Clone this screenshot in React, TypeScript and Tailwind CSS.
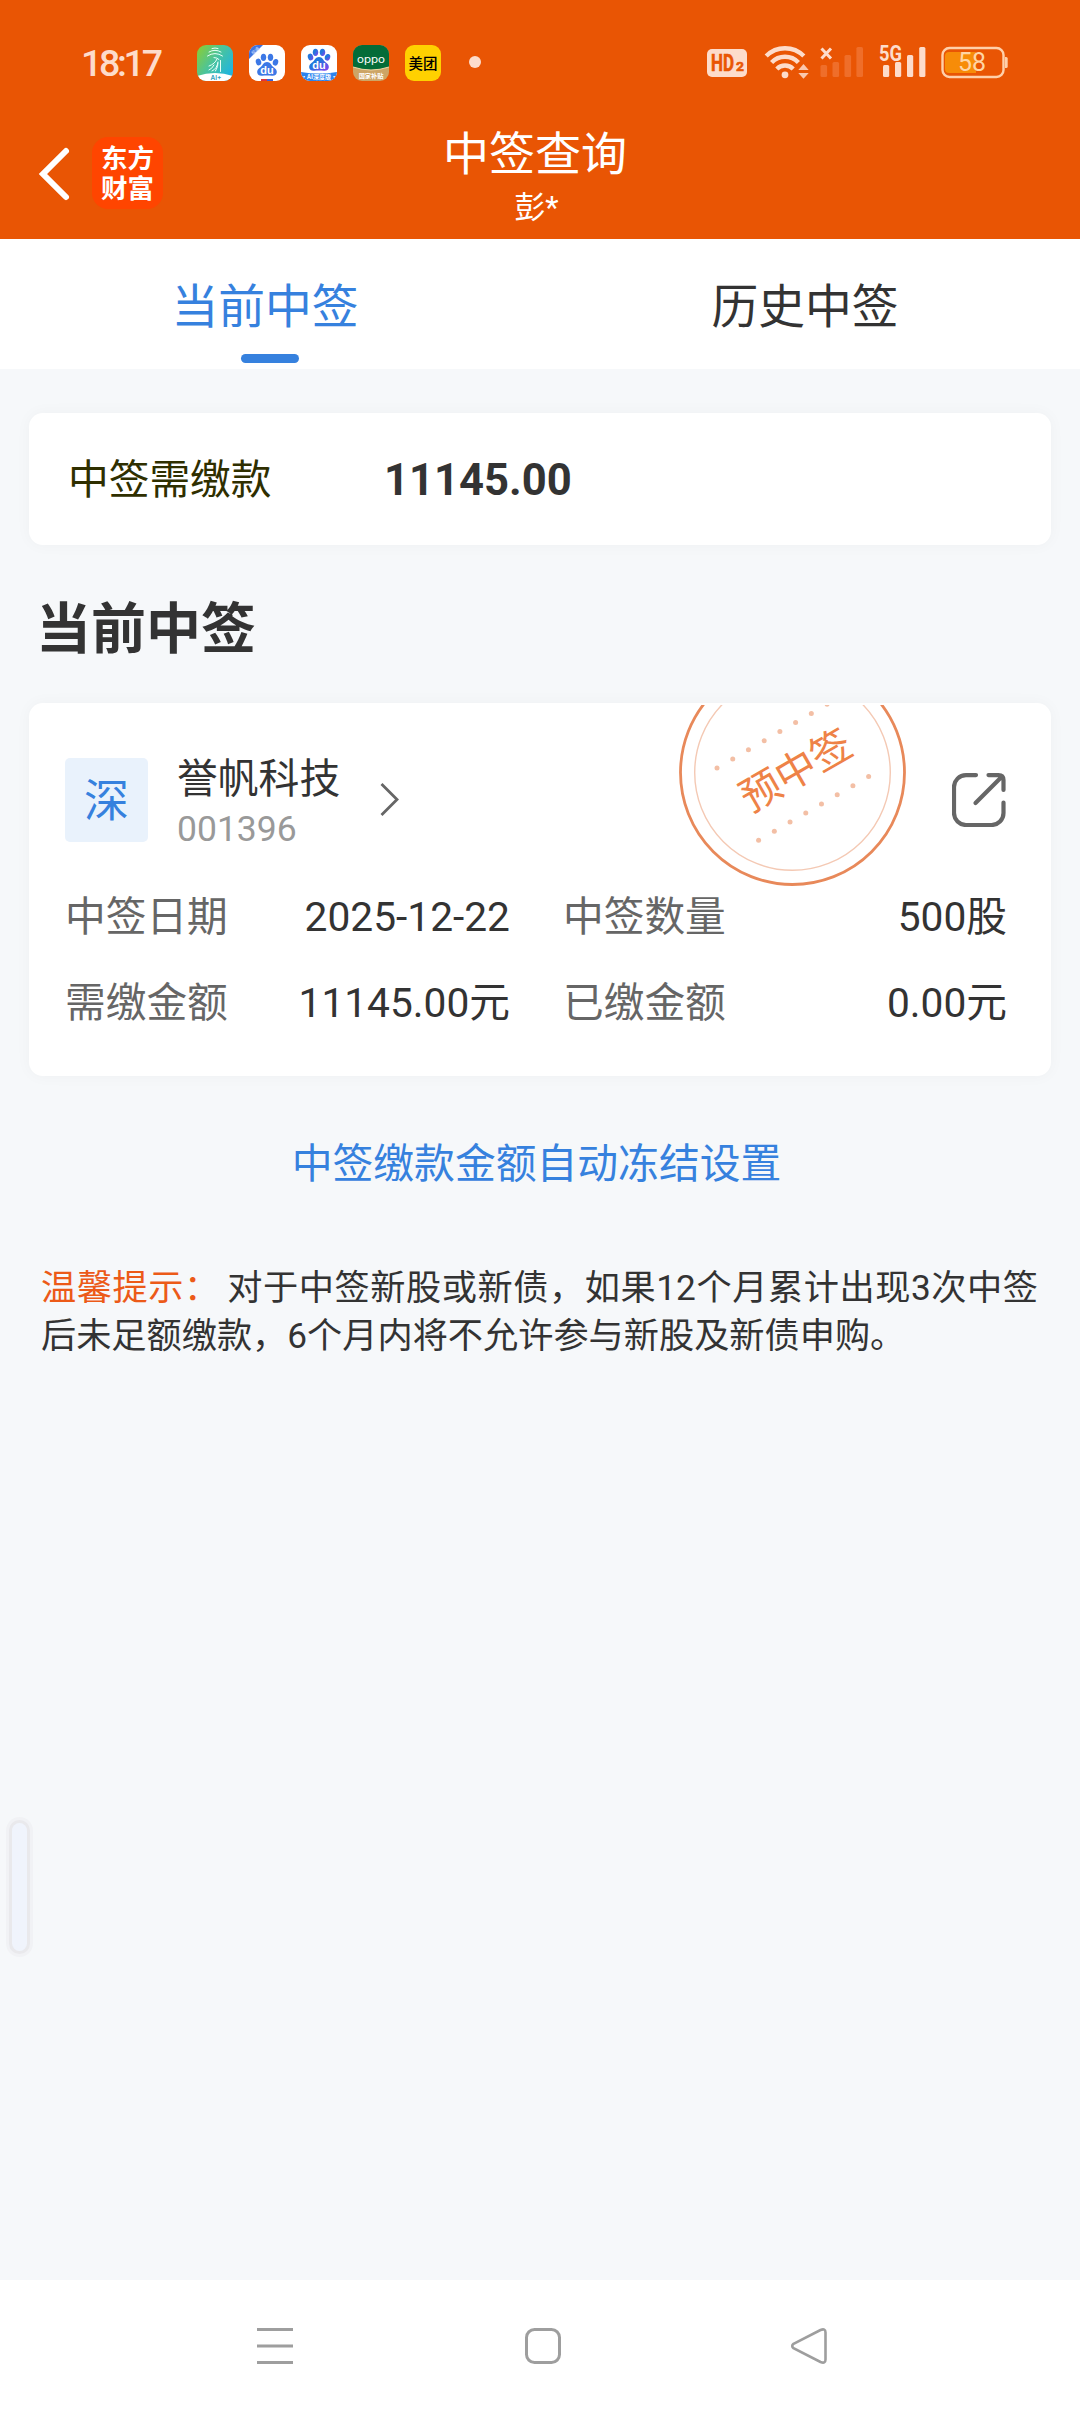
import { ReactNode } from 'react';

interface FieldProps {
  label: string;
  value: string;
}

const FIELDS: FieldProps[] = [
  { label: '中签日期', value: '2025-12-22' },
  { label: '中签数量', value: '500股' },
  { label: '需缴金额', value: '11145.00元' },
  { label: '已缴金额', value: '0.00元' },
];

const STAMP_DOTS = [0, 1, 2, 3, 4, 5, 6, 7];

function AppIcon({ children, id }: { children: ReactNode; id: string }) {
  return (
    <svg className="h-9 w-9" viewBox="0 0 36 36">
      <defs>
        <clipPath id={id}>
          <rect width="36" height="36" rx="9" />
        </clipPath>
      </defs>
      <g clipPath={`url(#${id})`}>{children}</g>
    </svg>
  );
}

function Paw({ fill, y = 0 }: { fill: string; y?: number }) {
  return (
    <g transform={`translate(0 ${y})`}>
      <g fill={fill}>
        <ellipse cx="9.5" cy="14" rx="2.7" ry="3.4" transform="rotate(-15 9.5 14)" />
        <ellipse cx="14.5" cy="9.3" rx="2.7" ry="3.6" />
        <ellipse cx="21.5" cy="9.3" rx="2.7" ry="3.6" />
        <ellipse cx="26.5" cy="14.3" rx="2.7" ry="3.4" transform="rotate(15 26.5 14.3)" />
        <path d="M18 14c-3.500 0-4 3-6.300 5s-3.900 3-3.500 5.600c.4 2.600 2.500 3.500 5 3.200 3-.4 6.600-.4 9.600 0 2.500.3 4.600-.6 5-3.200.4-2.600-1.200-3.600-3.500-5.600s-2.800-5-6.300-5z" />
      </g>
      <text x="18" y="25.500" textAnchor="middle" fill="#fff" className="font-['Liberation_Sans'] text-[11px] font-bold">
        du
      </text>
    </g>
  );
}

function StatusBar() {
  return (
    <div className="flex h-[124px] items-start pt-[44px] pl-[81px] text-[#fddccb]">
      <span className="w-[116px] font-[Roboto] text-[37.500px] leading-[38px] font-medium tracking-[-3.300px]">
        18:17
      </span>
      <div className="flex gap-4 pt-px">
        <AppIcon id="clip-health">
          <linearGradient id="health" x1="0" y1="0" x2="1" y2="0.7">
            <stop offset="0" stopColor="#8fce2c" />
            <stop offset="0.5" stopColor="#4cc49a" />
            <stop offset="1" stopColor="#1fb5e0" />
          </linearGradient>
          <rect width="36" height="36" fill="url(#health)" />
          <g fill="none" stroke="#e8fff8" strokeWidth="1" strokeLinecap="round">
            <path d="M15 3.500q3-1 6 0M12 7q6-3.500 12 0M10.500 11q7.500-5 15 0M17 12.500q3 0 5 2M20 14q-2 5-8 7M21 17q-1 7-6 9M17 20q-2 4-5 5M18.500 26q3-5 2.500-8M23.500 15.500v11" />
          </g>
          <path d="M0 31q18-6 36 0v5H0z" fill="#fff" />
          <text x="19" y="35" textAnchor="middle" fill="#2b9dbb" className="font-[Inter] text-[6.500px] font-semibold">
            AI+
          </text>
        </AppIcon>
        <AppIcon id="clip-lite">
          <rect width="36" height="36" fill="#fff" />
          <path d="M0 0h14L0 14z" fill="#3f73e0" />
          <text
            x="6"
            y="7.500"
            textAnchor="middle"
            transform="rotate(-45 6 5.500)"
            fill="#cfe0ff"
            className="font-['Noto_Sans_CJK_SC'] text-[4.500px]"
          >
            极速
          </text>
          <Paw fill="#3c78e6" y={3} />
          <path d="M12 34h6v2h-6z" fill="#e0343c" />
          <path d="M18 34h6v2h-6z" fill="#3b62d8" />
        </AppIcon>
        <AppIcon id="clip-baidu">
          <rect width="36" height="36" fill="#fff" />
          <linearGradient id="paw" x1="0" y1="0" x2="1" y2="1">
            <stop offset="0.4" stopColor="#2277dc" />
            <stop offset="1" stopColor="#8b3df0" />
          </linearGradient>
          <Paw fill="url(#paw)" y={-2} />
          <path d="M0 27q18 3 36 0v9H0z" fill="#2b83ee" />
          <text x="18" y="34.300" textAnchor="middle" fill="#fff" className="font-['Noto_Sans_CJK_SC'] text-[6px] font-bold">
            ·AI深度版·
          </text>
        </AppIcon>
        <AppIcon id="clip-oppo">
          <rect width="36" height="36" fill="#cda566" />
          <path d="M0 0h36v22q-18 6-36 0z" fill="#046c38" />
          <path d="M0 22q18 6 36 0" fill="none" stroke="#efd9a8" />
          <text x="18" y="18" textAnchor="middle" textLength="28" lengthAdjust="spacingAndGlyphs" fill="#fff" className="font-[Inter] text-[10px]">
            oppo
          </text>
          <text x="18" y="33" textAnchor="middle" fill="#fff" className="font-['Noto_Sans_CJK_SC'] text-[6.200px] font-bold">
            国家补贴
          </text>
        </AppIcon>
        <AppIcon id="clip-meituan">
          <rect width="36" height="36" fill="#ffd100" />
          <text x="18" y="23.500" textAnchor="middle" className="font-['Noto_Sans_CJK_SC'] text-[14.500px] font-medium">
            美团
          </text>
        </AppIcon>
      </div>
      <span className="mt-3 ml-7 h-3 w-3 rounded-full bg-[#fddccb]" />

      <svg className="mt-[5px] ml-[226px] h-7 w-10" viewBox="0 0 40 28" fill="#e95504" stroke="#e95504" strokeWidth="0.6">
        <rect width="40" height="28" rx="5" fill="#fddccb" stroke="none" />
        <text x="4" y="22" textLength="23" lengthAdjust="spacingAndGlyphs" className="font-[Roboto] text-[23px] font-bold">
          HD
        </text>
        <text x="29" y="22" textLength="8" lengthAdjust="spacingAndGlyphs" className="font-[Roboto] text-[13.500px] font-bold">
          2
        </text>
      </svg>
      <svg className="ml-[17px] h-9 w-[46px]" viewBox="0 0 46 36" fill="none" stroke="currentColor" strokeWidth="4.400">
        <path d="M2.200 12a26.500 26.500 0 0 1 37.600 0M7.600 18.500a18.500 18.500 0 0 1 26.800 0M12.800 25a11.500 11.500 0 0 1 16.400 0" />
        <circle cx="21" cy="30.800" r="3.400" fill="currentColor" stroke="none" />
        <path d="M34.300 26l5.200-6 5.200 6zM34.300 29h10.400l-5.200 5.800z" fill="currentColor" stroke="none" opacity="0.85" />
      </svg>
      <svg className="ml-[10px] h-9 w-[44px]" viewBox="0 0 44 36" fill="#ef6e2a">
        <path d="M1.500 4.500l9.500 10M11 4.500l-9.500 10" stroke="#fddccb" strokeWidth="3" />
        <rect x="0.500" y="21" width="6.600" height="12" rx="1.500" />
        <rect x="12.500" y="18" width="6.600" height="15" rx="1.500" />
        <rect x="24.500" y="11" width="6.600" height="22" rx="1.500" />
        <rect x="36.400" y="3" width="6.600" height="30" rx="1.500" />
      </svg>
      <svg className="ml-[15px] h-9 w-[48px] overflow-visible" viewBox="0 0 48 36" fill="currentColor">
        <text x="0" y="17" textLength="23" lengthAdjust="spacingAndGlyphs" className="font-[Roboto] text-[22px] font-bold">
          5G
        </text>
        <rect x="4" y="21" width="6.200" height="12" rx="1.500" />
        <rect x="16" y="18" width="6.200" height="15" rx="1.500" />
        <rect x="28" y="11" width="6.200" height="22" rx="1.500" />
        <rect x="40.200" y="3" width="6.200" height="30" rx="1.500" />
      </svg>
      <svg className="ml-[13px] h-9 w-[68px]" viewBox="0 0 68 36">
        <rect x="2.500" y="4" width="61" height="29" rx="7" fill="none" stroke="#ffd0aa" strokeWidth="2.400" />
        <path d="M9 8h27v21H9a4 4 0 0 1-4-4V12a4 4 0 0 1 4-4z" fill="#f78c08" />
        <path d="M65 13h1.200q1.500 0 1.500 1.500v8q0 1.500-1.500 1.500H65z" fill="#ffd0aa" />
        <text x="18" y="27" textLength="28" lengthAdjust="spacingAndGlyphs" fill="#ffd5a5" className="font-[Roboto] text-[25px]">
          58
        </text>
      </svg>
    </div>
  );
}

function TitleBar() {
  return (
    <div className="grid h-[115px] grid-cols-[442px_186px_1fr]">
      <div className="flex items-start pl-[38px]">
        <svg className="mt-[21px] h-[58px] w-[34px]" viewBox="0 0 34 58" fill="none" stroke="#fff" strokeWidth="6" strokeLinecap="round">
          <path d="M28 6L5 29l23 23" strokeLinejoin="miter" />
        </svg>
        <div className="mt-[13px] ml-[20px] h-[72px] w-[71px] rounded-2xl bg-[#ff4500] pt-[7px] text-center text-[26.500px] leading-[30px] font-bold text-white">
          <div>东方</div>
          <div>财富</div>
        </div>
      </div>
      <div className="flex flex-col items-center pt-[2px] text-white">
        <h1 className="text-[46px] leading-[56px] whitespace-nowrap">中签查询</h1>
        <p className="mt-[6px] ml-[3px] text-[31px] leading-[40px]">彭*</p>
      </div>
    </div>
  );
}

function Tabs() {
  return (
    <div className="grid h-[130px] grid-cols-2 bg-white text-[46.800px] leading-[56px]">
      <div className="flex flex-col items-center pt-[40px] text-[#3681de]">
        <span className="mr-[10px]">当前中签</span>
        <span className="mt-[19px] h-[9px] w-[58px] rounded-full bg-[#3681de]" />
      </div>
      <div className="flex flex-col items-center pt-[40px]">
        <span className="mr-[10px]">历史中签</span>
      </div>
    </div>
  );
}

function Card({ className = '', children }: { className?: string; children: ReactNode }) {
  return (
    <section className={`mx-[29px] rounded-[14px] bg-white shadow-[0_0_16px_rgba(0,0,0,0.035)] ${className}`}>
      {children}
    </section>
  );
}

function Stamp() {
  return (
    <svg className="absolute top-[2px] left-[648px] h-[183px] w-[232px]" viewBox="0 0 232 183">
      <circle cx="115.500" cy="67.500" r="112" fill="none" stroke="#e8895a" strokeWidth="2.800" />
      <circle cx="115.500" cy="67.500" r="97.800" fill="none" stroke="#f4c9b4" strokeWidth="1.400" />
      <g fill="#f3bfa5">
        {STAMP_DOTS.map((i) => (
          <g key={i}>
            <circle cx={40 + i * 15.72} cy={63 - i * 9.1} r="2.500" />
            <circle cx={81.600 + i * 15.72} cy={135.300 - i * 9.1} r="2.500" />
          </g>
        ))}
      </g>
      <text
        x="118.500"
        y="80"
        textAnchor="middle"
        transform="rotate(-30 118.500 65)"
        fill="#ee8247"
        className="text-[40.500px]"
      >
        预中签
      </text>
    </svg>
  );
}

function Field({ label, value }: FieldProps) {
  return (
    <div className="flex justify-between">
      <dt className="text-[#666]">{label}</dt>
      <dd>{value}</dd>
    </div>
  );
}

function NavBar() {
  return (
    <nav className="flex h-[132px] items-center bg-white pl-[255px] text-[#9e9e9e]">
      <svg className="h-10 w-10" viewBox="0 0 40 40" stroke="currentColor" strokeWidth="3">
        <path d="M2 3.500h36M2 20h36M2 36.500h36" />
      </svg>
      <svg className="ml-[228px] h-10 w-10" viewBox="0 0 40 40" fill="none" stroke="currentColor" strokeWidth="3">
        <rect x="3.500" y="3.500" width="33" height="33" rx="8" />
      </svg>
      <svg className="ml-[226px] h-10 w-10" viewBox="0 0 40 40" fill="none" stroke="currentColor" strokeWidth="2.600">
        <path d="M4.500 17.800L31.500 4q5-2 5 2.500v27q0 4.500-5 2.500L4.500 22.200q-2.600-2.200 0-4.400z" />
      </svg>
    </nav>
  );
}

export default function App() {
  return (
    <div className="relative flex h-[2412px] w-[1080px] flex-col overflow-hidden bg-[#f6f8fa] font-[Roboto,'Noto_Sans_CJK_SC',sans-serif] text-[#333]">
      <header className="bg-[#e95504]">
        <StatusBar />
        <TitleBar />
      </header>
      <Tabs />

      <main className="flex-1">
        <Card className="mt-[44px] flex h-[132px] items-center pt-[3px] pl-[39px]">
          <span className="w-[316px] text-[40.700px] text-[#2f2f00]">中签需缴款</span>
          <span className="text-[43.600px] font-bold">11145.00</span>
        </Card>

        <h2 className="mt-[50px] ml-[36px] text-[55px] leading-[68px] font-bold">当前中签</h2>

        <Card className="relative mt-[40px] h-[373px] pt-[50px]">
          <Stamp />
          <div className="flex h-[94px] items-start pl-[36px]">
            <div className="mt-[5px] flex h-[84px] w-[83px] items-center justify-center rounded-[5px] bg-[#e9f2fc] pt-[3px] text-[45px] text-[#3681de]">
              深
            </div>
            <div className="mt-px ml-[29px] w-[203px]">
              <div className="text-[40.800px] leading-[50px]">誉帆科技</div>
              <div className="text-[35.500px] leading-[50px] text-[#999]">001396</div>
            </div>
            <svg className="mt-[28px] h-9 w-6" viewBox="0 0 24 36" fill="none" stroke="#666" strokeWidth="2.800">
              <path d="M1.500 3l15.500 15.500L1.500 34" />
            </svg>
            <svg
              className="mt-[20px] ml-[548px] h-[54px] w-[54px]"
              viewBox="0 0 54 54"
              fill="none"
              stroke="#666"
              strokeWidth="4.200"
              strokeLinecap="round"
              strokeLinejoin="round"
            >
              <path d="M24 2.100H14a12 12 0 0 0-12 12V40a12 12 0 0 0 12 12H39.500a12 12 0 0 0 12-12V29.500" />
              <path d="M36.500 2.100H46.500q5 0 5 5V17M50 3.600L23.500 30" />
            </svg>
          </div>
          <dl className="mt-[40px] grid grid-cols-[445px_444px] gap-x-[53px] gap-y-[26px] pl-[36px] text-[40.700px] leading-[60px]">
            {FIELDS.map((field) => (
              <Field key={field.label} {...field} />
            ))}
          </dl>
        </Card>

        <a className="mt-[58px] mr-[7px] block text-center text-[40.800px] leading-[60px] text-[#3681de]">
          中签缴款金额自动冻结设置
        </a>

        <p className="mt-[70px] ml-[41px] w-[997px] text-justify text-[35.200px] leading-[48px]">
          <span className="mr-[-2px] text-[#ec5a18]">温馨提示：</span>{' '}
          对于中签新股或新债，如果12个月累计出现3次中签后未足额缴款，6个月内将不允许参与新股及新债申购。
        </p>
      </main>

      <NavBar />

      {/* edge panel handle */}
      <span className="absolute top-[1823px] left-[12px] h-[128px] w-[15px] rounded-full bg-[#f0f4fc] shadow-[0_0_0_3px_#e9e9ec,0_0_0_6px_#f1f2f5]" />
    </div>
  );
}
